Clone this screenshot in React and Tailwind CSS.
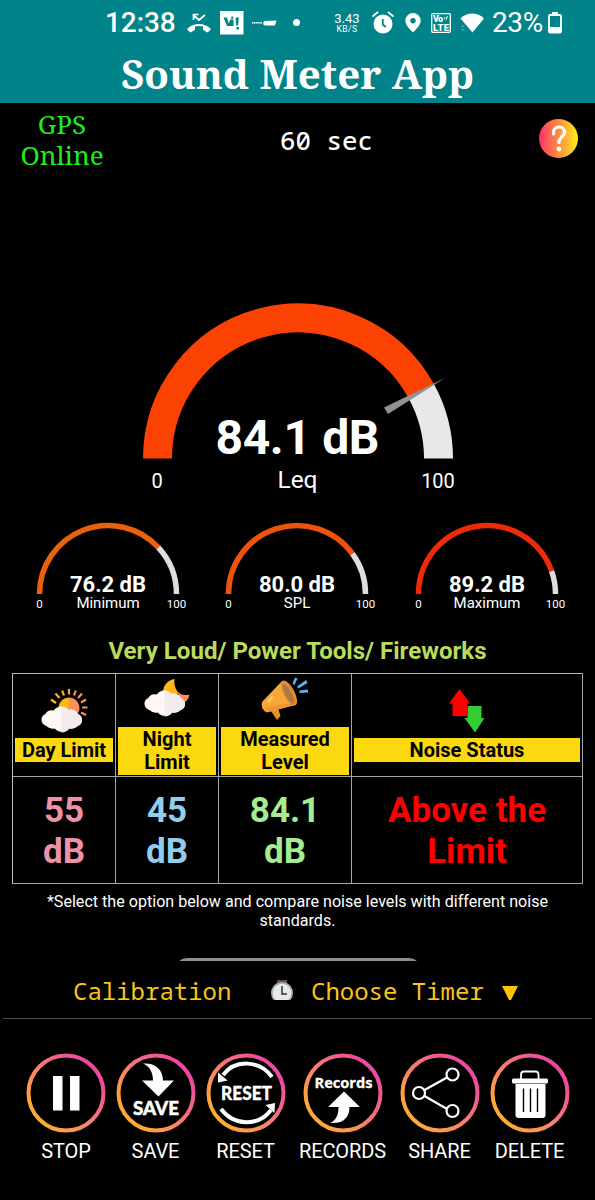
import React from 'react'

const polar = (cx, cy, r, percent) => {
  const angle = Math.PI * (1 - percent / 100)
  return `${cx + r * Math.cos(angle)} ${cy - r * Math.sin(angle)}`
}

const arc = (cx, cy, r, from, to) => `M${polar(cx, cy, r, from)}A${r} ${r} 0 0 1 ${polar(cx, cy, r, to)}`

const StatusBar = () => (
  <div className="flex h-[45px] items-center pl-[105px] text-white">
    <span className="w-[82px] text-[28px] leading-none font-medium tracking-[-0.1px]">12:38</span>
    <svg className="h-[24px] w-[24px]" viewBox="0 0 24 24">
      <path d="M6.500 3v6M6 3.500h5.500M6.500 4l5.500 5L18 4" fill="none" stroke="#fff" strokeWidth="1.700" />
      <path d="M.6 17.400C6.500 11.400 17.500 11.400 23.400 17.400c.6.6.5 1.100 0 1.600l-2.300 2c-.6.5-1 .5-1.600.1l-3-2c-.4-.3-.5-.7-.5-1.200v-2.300c-2.700-.9-5.300-.9-8 0v2.300c0 .5-.1.9-.5 1.200l-3 2c-.6.4-1 .4-1.600-.1l-2.300-2c-.5-.5-.6-1 0-1.600z" fill="#fff" />
    </svg>
    <svg className="ml-[9px] h-[24px] w-[24px]" viewBox="0 0 24 24">
      <path d="M0 0h23.500v23.500H0z" fill="#fff" />
      <path d="M3.500 6.500H7l1.800 6 1.400-4h3.300V15H7z" fill="#008489" />
      <path d="M15.500 7l3.300-1-.7 8.500h-1.800zM16.500 16h2.400v2.500h-2.400z" fill="#008489" />
      <circle cx="12.200" cy="6.700" r="1.200" fill="#008489" />
    </svg>
    <svg className="ml-[8px] h-[8px] w-[25px]" viewBox="0 0 25 8">
      <path d="M12 2l12.500-.5L23 6.500H13l-2-1.200zM0 3h10v1.500H0z" fill="#fff" />
      <path d="M1.500 3v1.500M3.500 3v1.500M6 3v1.500M8 3v1.500" stroke="#008489" strokeWidth=".6" />
    </svg>
    <span className="ml-[16px] h-[7px] w-[7px] rounded-full bg-white" />
    <span className="ml-[34px] w-[26px] text-center text-[13px] leading-[13px]">
      3.43
      <span className="block text-[8.500px] leading-[8px] tracking-[0.4px]">KB/S</span>
    </span>
    <svg className="ml-[11px] h-[24px] w-[24px]" viewBox="0 0 24 24">
      <circle cx="12" cy="13" r="9.500" fill="#fff" />
      <path d="M1.500 5.500l5.500-4.500M22.500 5.500l-5.500-4.500" stroke="#fff" strokeWidth="1.800" />
      <path d="M11.800 8v5.500l3 2.500" fill="none" stroke="#008489" strokeWidth="1.800" />
    </svg>
    <svg className="ml-[10px] h-[20px] w-[16px]" viewBox="0 0 16 20">
      <path d="M8 0a7.700 7.700 0 0 0-7.700 7.600C.3 13 8 19.500 8 19.500S15.700 13 15.700 7.600A7.700 7.700 0 0 0 8 0zm0 5a2.700 2.700 0 1 1 0 5.400A2.700 2.700 0 0 1 8 5z" fill="#fff" />
    </svg>
    <svg className="ml-[10px] h-[20px] w-[20px]" viewBox="0 0 20 20">
      <rect x=".7" y=".7" width="18.600" height="18.600" rx="1.200" fill="none" stroke="#fff" strokeWidth="1.300" />
      <text x="2" y="9.300" textLength="10" fontSize="9" fontWeight="900" fill="#fff">Vo</text>
      <text x="2" y="18" textLength="16" fontSize="9.500" fontWeight="900" fill="#fff">LTE</text>
      <path d="M13 6l1-2M15 7l1.500-4" stroke="#fff" />
    </svg>
    <svg className="ml-[9px] h-[20px] w-[24px]" viewBox="0 0 24 20">
      <path d="M.5 5.500C7-1.200 17.500-1.200 24 5.500L12.500 19.500z" fill="#fff" />
      <path d="M1 14l1.800-2 1.800 2zM1 16l1.800 2 1.800-2z" fill="#5aaeb1" />
    </svg>
    <span className="ml-[8px] w-[56px] text-[28px] leading-none tracking-[-0.4px]">23%</span>
    <svg className="h-[22px] w-[14px]" viewBox="0 0 14 22">
      <path d="M4 0h6v3H4z" fill="#fff" />
      <rect x="1" y="3" width="12" height="17.500" rx="1" fill="none" stroke="#fff" strokeWidth="1.800" />
      <path d="M1 15h12v6H1z" fill="#fff" />
    </svg>
  </div>
)

const MainGauge = () => (
  <svg className="block h-[210px] w-[340px]" viewBox="130 290 340 210">
    <path d={arc(298, 458.500, 140.500, 0, 84.100)} fill="none" stroke="#fb4202" strokeWidth="29" />
    <path d={arc(298, 458.500, 140.500, 84.100, 100)} fill="none" stroke="#e9e7e9" strokeWidth="29" />
    <path d="M384 407.500L445 378l-57 36z" fill="#919191" />
    <text x="297.500" y="454" textAnchor="middle" fontSize="48" fontWeight="700" textLength="164" fill="#fff">84.1 dB</text>
    <text x="297.500" y="487.500" textAnchor="middle" fontSize="24.500" fill="#fff">Leq</text>
    <text x="157" y="488" textAnchor="middle" fontSize="20" fill="#fff">0</text>
    <text x="438" y="488" textAnchor="middle" fontSize="20" fill="#fff">100</text>
  </svg>
)

const SmallGauge = ({ value, label, color }) => (
  <svg className="block h-[96px] w-[160px]" viewBox="-80 -76 160 96">
    <path d={arc(0, -2, 68.500, 0, value)} fill="none" stroke={color} strokeWidth="5.500" />
    <path d={arc(0, -2, 68.500, value, 100)} fill="none" stroke="#dedde0" strokeWidth="5.500" />
    <text x="0" y="-4" textAnchor="middle" fontSize="22" fontWeight="700" textLength="76" fill="#fff">{value.toFixed(1)} dB</text>
    <text x="0" y="11.500" textAnchor="middle" fontSize="15" fill="#fff">{label}</text>
    <text x="-68.500" y="11.500" textAnchor="middle" fontSize="11.500" fill="#fff">0</text>
    <text x="68.500" y="11.500" textAnchor="middle" fontSize="11.500" fill="#fff">100</text>
  </svg>
)

const Cloud = () => (
  <>
    <path d="M6 31a6.500 6.500 0 0 1-1-12 7 7 0 0 1 8-3.500 8.500 8.500 0 0 1 14-.5 7 7 0 0 1 9 4 6.500 6.500 0 0 1 0 12 9 9 0 0 1-8 2.500 9 9 0 0 1-14 0 9 9 0 0 1-8-2.500z" fill="#fff7f4" />
    <path d="M20.500 11.500a8.500 8.500 0 0 1 6.500 3.500 7 7 0 0 1 9 4 6.500 6.500 0 0 1 0 12 9 9 0 0 1-8 2.500q-3 4-7.500 4z" fill="#f3ebed" />
  </>
)

const DayIcon = () => (
  <svg className="h-[44px] w-[48px]" viewBox="0 0 48 44">
    <path d="M18.500 19a10.500 10.500 0 0 1 10.500-10.500v17z" fill="#ffb61d" />
    <path d="M29 8.500a10.500 10.500 0 0 1 8.500 16.500L29 25z" fill="#ff8f5c" />
    <g strokeWidth="2.200">
      <path d="M29 5.500V0" stroke="#ffa33d" />
      <path d="M24 6.500l-1.800-5M19.500 9L15.500 4.500M16 14l-5-3.500" stroke="#ffb61d" />
      <path d="M34 6.500l1.800-5M38 9l4-4.500M41 13.500l5-3M42 18.500h5.500M41 23.500l5 2.500" stroke="#ff9158" />
    </g>
    <g transform="translate(0 6) scale(1.050 1)"><Cloud /></g>
  </svg>
)

const NightIcon = () => (
  <svg className="h-[40px] w-[48px]" viewBox="0 0 48 40">
    <path d="M31.500 0a18 18 0 0 0 3.500 13.500l-2 8.500L20 14C20 6 25 1 31.500 0z" fill="#ffb61d" />
    <path d="M34.500 12.500Q39 17.500 46.500 15.500 45 23.500 38 24z" fill="#ff8f5c" />
    <g transform="scale(1.050 1)"><Cloud /></g>
  </svg>
)

const MegaphoneIcon = () => (
  <svg className="h-[44px] w-[50px]" viewBox="0 0 50 44">
    <path d="M11 34l7-3 2.500 8-3.500 4z" fill="#e8902c" />
    <path d="M22 4L2 25q-2 7 5 10.500L35 28z" fill="#f8a638" />
    <path d="M5 31q2 4 7 3l23-6-1-3z" fill="#ee9430" />
    <ellipse cx="29" cy="16" rx="5.500" ry="13.800" transform="rotate(-28 29 16)" fill="#e28d33" />
    <ellipse cx="28.500" cy="17" rx="3.200" ry="11" transform="rotate(-28 28.500 17)" fill="#ad7842" />
    <path d="M7 24l5-5 1 1-4 6z" fill="#ffd07c" />
    <path d="M32.500 6.500L35 .5l2.500 1-3 6.500zM37 9.500L46 3l1.500 3-9 5.500zM39.500 13.500l8.500-1v3l-8.500.5z" fill="#54b7ee" />
  </svg>
)

const StatusArrows = () => (
  <svg className="h-[44px] w-[36px]" viewBox="0 0 36 44">
    <path d="M10.500 0L21 14.500h-3V27H3.500V14.500H0z" fill="#fe0000" />
    <path d="M18.500 17h14v12h3L26 43.500 15.500 29h3z" fill="#33cd32" />
  </svg>
)

const limits = [
  { icon: <DayIcon />, label: ['Day Limit'], value: '55 dB', color: 'text-[#ec91a7]', valueWidth: 'w-[60px]', pad: 'pt-[15px]', gap: 'mt-[5px]' },
  { icon: <NightIcon />, label: ['Night', 'Limit'], value: '45 dB', color: 'text-[#91cdec]', valueWidth: 'w-[60px]', pad: 'pt-[5px]', gap: 'mt-[8px]' },
  { icon: <MegaphoneIcon />, label: ['Measured', 'Level'], value: '84.1 dB', color: 'text-[#a4eb91]', valueWidth: 'w-[80px]', pad: 'pt-[3px]', gap: 'mt-[6px]' },
  { icon: <StatusArrows />, label: ['Noise Status'], value: 'Above the Limit', color: 'text-[#fe0000]', valueWidth: 'w-[170px]', pad: 'pt-[15px]', gap: 'mt-[5px]' },
]

const LimitsTable = () => (
  <div className="ml-[12px] grid h-[211px] w-[571px] shrink-0 grid-cols-[103px_103px_133px_231px] grid-rows-[103px_107px] border-t border-l border-[#b9b9b9]">
    {limits.map((item) => (
      <div key={item.value} className={`flex flex-col items-center border-r border-b border-[#a5a5a5] px-[2px] ${item.pad}`}>
        {item.icon}
        <p className={`w-full bg-[#fbd90e] pt-[0.700px] text-center text-[20px] leading-[23.500px] font-bold text-black ${item.gap}`}>
          {item.label.map((line) => <span key={line} className="block">{line}</span>)}
        </p>
      </div>
    ))}
    {limits.map((item) => (
      <div key={item.value} className="flex justify-center border-r border-b border-[#a5a5a5] pt-[12.500px]">
        <p className={`text-center text-[35px] leading-[41px] font-bold ${item.color} ${item.valueWidth}`}>{item.value}</p>
      </div>
    ))}
  </div>
)

const Ring = ({ children }) => (
  <svg className="h-[80px] w-[80px]" viewBox="0 0 80 80">
    <circle cx="40" cy="40" r="37.500" fill="none" stroke="url(#ring)" strokeWidth="4" />
    {children}
  </svg>
)

const actions = [
  {
    label: 'STOP',
    width: 'w-[90px]',
    icon: <path d="M27 23h9.500v34.500H27zM44 23h9.500v34.500H44z" fill="#fff" />,
  },
  {
    label: 'SAVE',
    width: 'w-[89px]',
    icon: (
      <>
        <path d="M27 10.500c11-1 20 5 20 17h11L42.500 43.500 26 27.500h11c0-8-3-14-10-17z" fill="#fff" />
        <text x="40" y="62" textAnchor="middle" fontFamily="Lato" fontSize="19.500" fontWeight="900" textLength="46" lengthAdjust="spacingAndGlyphs" fill="#fff" stroke="#fff" strokeWidth=".5">SAVE</text>
      </>
    ),
  },
  {
    label: 'RESET',
    width: 'w-[91px]',
    icon: (
      <>
        <path d="M66 24C54 7 29 6 17 22M15 56C28 73 52 74 65 57" fill="none" stroke="#fff" strokeWidth="4" />
        <path d="M12 19.500v10l9.500-2zM69 50l-9.500 2 9 8z" fill="#fff" />
        <text x="40.500" y="46.500" textAnchor="middle" fontFamily="Lato" fontSize="19" fontWeight="900" textLength="51" lengthAdjust="spacingAndGlyphs" fill="#fff" stroke="#fff" strokeWidth=".3">RESET</text>
      </>
    ),
  },
  {
    label: 'RECORDS',
    width: 'w-[103px]',
    icon: (
      <>
        <text x="40.500" y="35" textAnchor="middle" fontFamily="Open Sans" fontSize="15" fontWeight="700" textLength="58" lengthAdjust="spacingAndGlyphs" fill="#fff" stroke="#fff" strokeWidth=".3">Records</text>
        <path d="M41 38.500l16 15.500H46.500C46.500 64 41 71 27 70c6-2.500 8.500-8 8.500-16H25z" fill="#fff" />
      </>
    ),
  },
  {
    label: 'SHARE',
    width: 'w-[91px]',
    icon: (
      <g fill="none" stroke="#fff" strokeWidth="2.200">
        <path d="M24.500 37L47 24.500M24.500 43L47 56" />
        <circle cx="19" cy="40" r="6" />
        <circle cx="52.500" cy="21.500" r="6" />
        <circle cx="52.500" cy="58" r="6" />
      </g>
    ),
  },
  {
    label: 'DELETE',
    width: 'w-[89px]',
    icon: (
      <>
        <path d="M31 26v-4.500q0-3 3-3h11.500q3 0 3 3V26" fill="none" stroke="#fff" strokeWidth="1.800" />
        <rect x="22" y="25.500" width="36" height="5" rx="1.500" fill="#fff" />
        <path d="M25.500 31h30v31q0 3-3 3h-24q-3 0-3-3z" fill="#fff" />
        <path d="M33.500 35.500V59M40.500 35.500V59M47.500 35.500V59" stroke="#000" strokeWidth="1.400" />
      </>
    ),
  },
]

const App = () => (
  <div className="flex h-[1200px] w-[595px] flex-col overflow-hidden bg-black font-[Roboto,sans-serif] text-white">
    <svg className="h-0 w-0 shrink-0">
      <defs>
        <linearGradient id="ring" x1="0.1" y1="0.9" x2="0.85" y2="0.2">
          <stop offset="0" stopColor="#ffb02c" />
          <stop offset="0.5" stopColor="#f9806d" />
          <stop offset="1" stopColor="#ed4ba0" />
        </linearGradient>
      </defs>
    </svg>

    <header className="h-[103px] shrink-0 bg-[#008489]">
      <StatusBar />
      <h1 className="pt-[7px] text-center font-['Noto_Serif','DejaVu_Serif_Condensed','DejaVu_Serif',serif] text-[40.300px] leading-[44px] font-bold">Sound Meter App</h1>
    </header>

    <div className="flex h-[77px] shrink-0">
      <p className="w-[124px] shrink-0 pt-[6px] text-center font-['Noto_Serif','DejaVu_Serif_Condensed','DejaVu_Serif',serif] text-[26px] leading-[30.500px] text-[#1dee1d]">GPS<br />Online</p>
      <p className="ml-[156px] w-[93px] shrink-0 pt-[21px] font-['Noto_Sans_Mono','DejaVu_Sans_Mono',monospace] text-[25.800px] leading-[32px] font-medium whitespace-nowrap">60 sec</p>
      <div className="shrink-0 pt-[16px] pl-[166px]">
        <div className="flex h-[39px] w-[39px] items-center justify-center rounded-full bg-linear-to-r from-[#ff2464] via-[#ff8a3c] to-[#fff000]">
          <svg className="h-[28px] w-[20px]" viewBox="0 0 20 28">
            <path d="M4.500 9V7.500a5.500 5.500 0 0 1 11 0c0 4-5.500 5-5.500 9v1" fill="none" stroke="#fff" strokeWidth="3.200" strokeLinecap="round" />
            <circle cx="10" cy="24" r="2.400" fill="#fff" />
          </svg>
        </div>
      </div>
    </div>

    <div className="mt-[110px] ml-[130px] shrink-0">
      <MainGauge />
    </div>

    <div className="mt-[20px] ml-[27.500px] flex shrink-0 gap-[29.500px]">
      <SmallGauge value={76.2} label="Minimum" color="#e9610b" />
      <SmallGauge value={80} label="SPL" color="#ef530a" />
      <SmallGauge value={89.2} label="Maximum" color="#ec2b08" />
    </div>

    <p className="mt-[21px] mb-[7px] shrink-0 text-center text-[24.100px] leading-[29px] font-bold text-[#badb5b]">Very Loud/ Power Tools/ Fireworks</p>

    <LimitsTable />

    <p className="mx-auto mt-[8px] h-[38px] w-[520px] shrink-0 text-center text-[16.100px] leading-[19px]">*Select the option below and compare noise levels with different noise standards.</p>

    <div className="mx-auto mt-[28px] h-[3px] w-[246px] shrink-0 overflow-hidden">
      <div className="h-[50px] rounded-[12px] bg-[#8e8d9c]" />
    </div>

    <div className="mt-[17px] flex h-[22px] shrink-0 overflow-hidden pl-[73px] font-['Noto_Sans_Mono','DejaVu_Sans_Mono',monospace] text-[24px] leading-[26px] text-[#fcc419]">
      <span className="w-[197px]">Calibration</span>
      <svg className="mt-[2px] h-[26px] w-[24px]" viewBox="0 0 24 26">
        <path d="M7 0h10v8H7z" fill="#66504f" />
        <circle cx="12" cy="13" r="11" fill="#a4aaae" />
        <circle cx="12" cy="13" r="9.300" fill="#e7eaec" />
        <path d="M12 6v8h5" fill="none" stroke="#333" strokeWidth="1.500" />
      </svg>
      <span className="ml-[17px] w-[191px] whitespace-nowrap">Choose Timer</span>
      <svg className="mt-[8px] h-[16px] w-[16px]" viewBox="0 0 16 16"><path d="M0 0h16L8 16z" fill="#ffc400" /></svg>
    </div>

    <div className="mx-[3px] mt-[18px] h-px shrink-0 bg-[#4b4b4b]" />

    <nav className="mt-[34px] flex shrink-0 pl-[21px]">
      {actions.map(({ label, icon, width }) => (
        <div key={label} className={`flex flex-col items-center ${width}`}>
          <Ring>{icon}</Ring>
          <span className="mt-[6px] text-[20px] leading-[24px] tracking-[-0.1px]">{label}</span>
        </div>
      ))}
    </nav>
  </div>
)

export default App
